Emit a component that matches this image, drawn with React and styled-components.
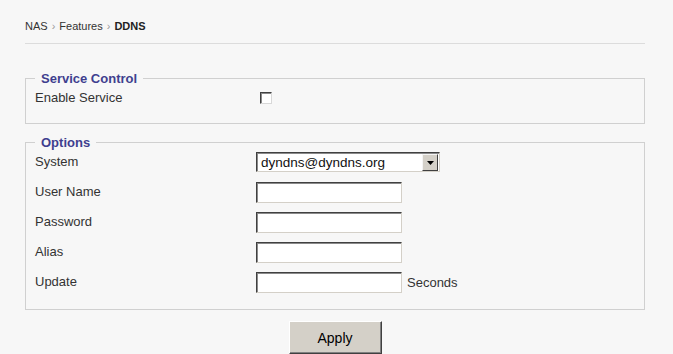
import React from 'react'
import styled, { createGlobalStyle } from 'styled-components'

const GlobalStyle = createGlobalStyle`
  html, body {
    margin: 0;
    padding: 0;
    background: #f7f7f7;
    font-family: "Liberation Sans", Arial, sans-serif;
    color: #333;
  }
`

const Page = styled.div`
  width: 620px;
  padding: 20px 0 0 25px;
`

const Crumbs = styled.div`
  font-size: 11px;
  line-height: 12px;
  color: #333;
  padding-bottom: 11px;
  border-bottom: 1px solid #dcdcdc;
  margin-bottom: 27px;
`

const Sep = styled.span`
  color: #999;
  margin: 0 4px;
`

const Current = styled.b`
  color: #222;
`

const Box = styled.fieldset`
  margin: 0 0 11px;
  padding: 0 9px ${(p) => p.$bottom || 10}px;
  border: 1px solid #d0d0d0;
  min-width: 0;
`

const Legend = styled.legend`
  padding: 0 6px;
  font-size: 13px;
  line-height: 15px;
  font-weight: bold;
  color: #3f3f8f;
`

const Form = styled.div`
  display: grid;
  grid-template-columns: 221px auto;
  grid-auto-rows: 30px;
  align-items: center;
  margin-top: -3px;
`

const Label = styled.div`
  font-size: 13px;
  color: #333;
  padding-bottom: 2px;
`

const Field = styled.div`
  display: flex;
  align-items: center;
  gap: 5px;
  font-size: 13px;
  color: #333;
`

const Check = styled.input`
  appearance: none;
  box-sizing: border-box;
  width: 12px;
  height: 12px;
  margin: 0 0 0 4px;
  border: 1px solid;
  border-color: #404040 #d8d8d8 #d8d8d8 #404040;
  box-shadow: inset 1px 1px 0 #8a8a8a;
  background: #fff;
`

const Text = styled.input`
  box-sizing: border-box;
  width: 146px;
  height: 21px;
  margin: 0;
  padding: 0 3px;
  border: 1px solid;
  border-color: #404040 #d4d0c8 #d4d0c8 #404040;
  box-shadow: inset 1px 1px 0 #8a8a8a;
  background: #fff;
  font: 13px "Liberation Sans", Arial, sans-serif;
  outline: none;
`

const Select = styled.div`
  box-sizing: border-box;
  width: 184px;
  height: 20px;
  display: flex;
  align-items: center;
  border: 1px solid;
  border-color: #404040 #d4d0c8 #d4d0c8 #404040;
  box-shadow: inset 1px 1px 0 #8a8a8a;
  background: #fff;
  padding: 1px 1px 0 4px;
  font-size: 13.5px;
  color: #111;
`

const SelectValue = styled.span`
  flex: 1;
`

const Drop = styled.span`
  box-sizing: border-box;
  width: 16px;
  height: 17px;
  display: flex;
  align-items: center;
  justify-content: center;
  background: #d4d0c8;
  border: 1px solid;
  border-color: #f4f4f4 #404040 #404040 #f4f4f4;
`

const Actions = styled.div`
  display: flex;
  justify-content: center;
`

const Button = styled.button`
  width: 93px;
  height: 33px;
  background: #d4d0c8;
  border: 1px solid;
  border-color: #ffffff #404040 #404040 #ffffff;
  box-shadow: inset -1px -1px 0 #808080;
  font: 14px "Liberation Sans", Arial, sans-serif;
  color: #000;
  padding: 0;
`

const fields = [
  { label: 'User Name' },
  { label: 'Password', type: 'password' },
  { label: 'Alias' },
  { label: 'Update', unit: 'Seconds' },
]

export default function App() {
  return (
    <>
      <GlobalStyle />
      <Page>
        <Crumbs>
          NAS<Sep>›</Sep>Features<Sep>›</Sep><Current>DDNS</Current>
        </Crumbs>

        <Box>
          <Legend>Service Control</Legend>
          <Form>
            <Label>Enable Service</Label>
            <Field>
              <Check type="checkbox" />
            </Field>
          </Form>
        </Box>

        <Box $bottom={12}>
          <Legend>Options</Legend>
          <Form>
            <Label>System</Label>
            <Field>
              <Select>
                <SelectValue>dyndns@dyndns.org</SelectValue>
                <Drop>
                  <svg width="7" height="4" viewBox="0 0 7 4">
                    <path d="M0 0h7L3.5 4z" fill="#000" />
                  </svg>
                </Drop>
              </Select>
            </Field>
            {fields.map((f) => (
              <React.Fragment key={f.label}>
                <Label>{f.label}</Label>
                <Field>
                  <Text type={f.type || 'text'} />
                  {f.unit}
                </Field>
              </React.Fragment>
            ))}
          </Form>
        </Box>

        <Actions>
          <Button>Apply</Button>
        </Actions>
      </Page>
    </>
  )
}
